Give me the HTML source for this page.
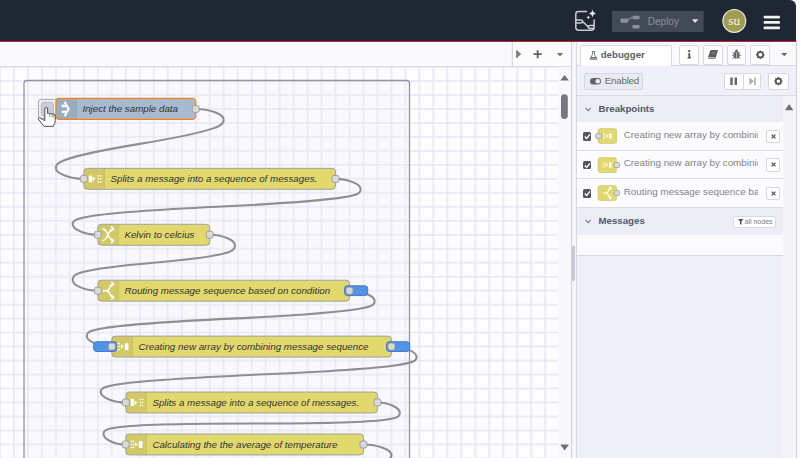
<!DOCTYPE html>
<html><head><meta charset="utf-8">
<style>
*{box-sizing:border-box}
html,body{margin:0;padding:0;width:800px;height:458px;overflow:hidden;background:#fafafc;font-family:"Liberation Sans",sans-serif}
.abs{position:absolute}
#hdr{left:0;top:0;width:796px;height:41px;background:#1f2734;border-top-right-radius:6px}
#tabbar{left:0;top:41.5px;width:572px;height:25.5px;background:#fafafc;border-bottom:1px solid #dcdce4}
#canvas{left:0;top:0;width:800px;height:458px}
.lbl{font-family:"Liberation Sans",sans-serif;font-style:italic;font-size:14px;fill:#333}
#sep{left:571px;top:41px;width:6px;height:417px;background:#f6f6fa;border-left:1px solid #cfcfd8;border-right:1px solid #d8d8e0}
#sidebar{left:577px;top:41px;width:219px;height:417px;background:#eff0f7;overflow:hidden}
#rightstrip{left:796px;top:40px;width:4px;height:418px;background:#fbfbfc;border-left:1px solid #cfcfd6}
.sb{position:absolute}
.tbtn{position:absolute;top:4.3px;height:20.2px;background:#fff;border:1px solid #d8d8e0;border-radius:2px}
.btn{position:absolute;background:#fff;border:1px solid #d8d8e0;border-radius:2px}
.hdrtxt{position:absolute;font-weight:bold;font-size:9.7px;color:#535a66}
.row{position:absolute;left:0;width:205.6px;background:#fcfcfe;border-bottom:1px solid #dcdce4}
.rowtxt{position:absolute;left:46.7px;font-size:9.85px;color:#828288;white-space:nowrap;width:134.5px;overflow:hidden}
.chk{position:absolute;left:5.8px;width:8.4px;height:8.6px;background:#55565c;border-radius:1.5px}
.xbtn{position:absolute;left:189.2px;width:13.8px;height:13.4px;background:#fff;border:1px solid #d6d6de;border-radius:2px}
</style></head>
<body>
<svg id="canvas" class="abs" width="800" height="458" viewBox="0 0 800 458">
  <defs>
    <pattern id="grid" x="0" y="67" width="13.98" height="13.98" patternUnits="userSpaceOnUse">
      <rect x="0" y="0" width="13.98" height="13.98" fill="#fdfdff"/>
      <rect x="-0.7" y="0" width="1.4" height="13.98" fill="#e4e4f3"/>
      <rect x="0" y="-0.7" width="13.98" height="1.4" fill="#e4e4f3"/>
      <rect x="13.28" y="0" width="1.4" height="13.98" fill="#e4e4f3"/>
      <rect x="0" y="13.28" width="13.98" height="1.4" fill="#e4e4f3"/>
    </pattern>
  </defs>
  <rect x="0" y="67" width="558" height="391" fill="url(#grid)"/>
  <rect x="558" y="67" width="13" height="391" fill="#f8f8fb"/>
  <rect x="24" y="80.5" width="385.5" height="420" rx="3" fill="#eeeef8" fill-opacity="0.35" stroke="#94949c" stroke-width="1.3"/>
<g transform="translate(0,67) scale(0.699)">
<path d="M 280 60 C 300 60 320 67.5 320 75 S 320 90 200 110 S 80 137.5 80 145 S 100 160 120 160" fill="none" stroke="#8f8f93" stroke-width="3"/>
<path d="M 480 160 C 498 160 516 167.5 516 175 S 516 190 310 200 S 104 217.5 104 225 S 122 240 140 240" fill="none" stroke="#8f8f93" stroke-width="3"/>
<path d="M 300 240 C 318 240 336 247.5 336 255 S 336 270 220 280 S 104 297.5 104 305 S 122 320 140 320" fill="none" stroke="#8f8f93" stroke-width="3"/>
<path d="M 500 320 C 518 320 536 327.5 536 335 S 536 350 330 360 S 124 377.5 124 385 S 142 400 160 400" fill="none" stroke="#8f8f93" stroke-width="3"/>
<path d="M 560 400 C 578 400 596 407.5 596 415 S 596 430 370 440 S 144 457.5 144 465 S 162 480 180 480" fill="none" stroke="#8f8f93" stroke-width="3"/>
<path d="M 540 480 C 556 480 572 487.5 572 495 S 572 510 360 510 S 148 517.5 148 525 S 164 540 180 540" fill="none" stroke="#8f8f93" stroke-width="3"/>
<path d="M 520 540 C 540 540 560 547.5 560 555 S 560 570 350 600 S 140 637.5 140 645 S 160 660 180 660" fill="none" stroke="#8f8f93" stroke-width="3"/>
<g transform="translate(55,46.3)"><rect x="0" y="0" width="32" height="27.5" rx="4" fill="#eeeef3" stroke="#a2a2aa" stroke-width="1.3"/><rect x="4.3" y="4.3" width="17" height="19.5" rx="3" fill="#c9cdd9" stroke="#a9adb8" stroke-width="1"/></g>
<rect x="80" y="45" width="200" height="30" rx="5" fill="#a6bbcf" stroke="#ff7f0e" stroke-width="1.8"/>
<path d="M81 46 h29 v28 h-29 z" fill="#000" fill-opacity="0.07"/>
<path d="M109.5 46 v28" stroke="#000" stroke-opacity="0.12" stroke-width="1.2" stroke-dasharray="1.5 1.5"/>
<g transform="translate(95,60) scale(1)"><path d="M-6.8 -4.2 H-0.4 M-6.8 4.2 H-0.4" stroke="#fff" stroke-width="3.3" fill="none"/><path d="M-2.6 -10.4 L3.2 0 L-2.6 10.4" stroke="#fff" stroke-width="2.8" fill="none" stroke-linejoin="miter"/></g>
<text x="118" y="64.9" class="lbl">Inject the sample data</text>
<rect x="275" y="55" width="10" height="10" rx="3" fill="#d9d9d9" stroke="#999" stroke-width="1.3"/>
<rect x="120" y="145" width="360" height="30" rx="5" fill="#e2d96e" stroke="#999" stroke-width="1.3"/>
<path d="M121 146 h29 v28 h-29 z" fill="#000" fill-opacity="0.07"/>
<path d="M149.5 146 v28" stroke="#000" stroke-opacity="0.12" stroke-width="1.2" stroke-dasharray="1.5 1.5"/>
<g transform="translate(135,160) scale(1)" fill="#fff"><rect x="-8" y="-4.9" width="4.9" height="9.8" rx="0.6"/><path d="M-2.4 -3.3 L1.6 0 L-2.4 3.3 z"/><rect x="4.7" y="-5.3" width="2" height="2"/><rect x="7.9" y="-5.3" width="2" height="2"/><rect x="4.7" y="-1" width="2" height="2"/><rect x="7.9" y="-1" width="2" height="2"/><rect x="4.7" y="3.3" width="2" height="2"/><rect x="7.9" y="3.3" width="2" height="2"/></g>
<text x="158" y="164.9" class="lbl">Splits a message into a sequence of messages.</text>
<rect x="115" y="155" width="10" height="10" rx="3" fill="#d9d9d9" stroke="#999" stroke-width="1.3"/>
<rect x="475" y="155" width="10" height="10" rx="3" fill="#d9d9d9" stroke="#999" stroke-width="1.3"/>
<rect x="140" y="225" width="160" height="30" rx="5" fill="#e2d96e" stroke="#999" stroke-width="1.3"/>
<path d="M141 226 h29 v28 h-29 z" fill="#000" fill-opacity="0.07"/>
<path d="M169.5 226 v28" stroke="#000" stroke-opacity="0.12" stroke-width="1.2" stroke-dasharray="1.5 1.5"/>
<g transform="translate(155,240) scale(1)" fill="none" stroke="#fff" stroke-width="2.1" stroke-linecap="round" stroke-linejoin="round"><path d="M-8 -8.5 C-1 -8.5 0 8.5 7 8.5 M-8 8.5 C-1 8.5 0 -8.5 7 -8.5"/><path d="M4.4 -11.4 L7.6 -8.5 L4.4 -5.6 M4.4 5.6 L7.6 8.5 L4.4 11.4"/></g>
<text x="178" y="244.9" class="lbl">Kelvin to celcius</text>
<rect x="135" y="235" width="10" height="10" rx="3" fill="#d9d9d9" stroke="#999" stroke-width="1.3"/>
<rect x="295" y="235" width="10" height="10" rx="3" fill="#d9d9d9" stroke="#999" stroke-width="1.3"/>
<rect x="140" y="305" width="360" height="30" rx="5" fill="#e2d96e" stroke="#999" stroke-width="1.3"/>
<path d="M141 306 h29 v28 h-29 z" fill="#000" fill-opacity="0.07"/>
<path d="M169.5 306 v28" stroke="#000" stroke-opacity="0.12" stroke-width="1.2" stroke-dasharray="1.5 1.5"/>
<g transform="translate(155,320) scale(1)" fill="none" stroke="#fff" stroke-width="2.1" stroke-linecap="round" stroke-linejoin="round"><path d="M-7.5 0 H-2.5 C0.5 0 1 -1.5 2 -4.5 C3 -8 4 -9.5 7.5 -9.5 M-2.5 0 C0.5 0 1 1.5 2 4.5 C3 8 4 9.5 7.5 9.5"/><path d="M4.8 -12.3 L7.8 -9.5 L4.8 -6.7 M4.8 6.7 L7.8 9.5 L4.8 12.3"/></g>
<text x="178" y="324.9" class="lbl">Routing message sequence based on condition</text>
<rect x="493" y="313" width="33" height="14" rx="4" fill="#5193e6" stroke="#3b74c4" stroke-width="1.3"/>
<rect x="135" y="315" width="10" height="10" rx="3" fill="#d9d9d9" stroke="#999" stroke-width="1.3"/>
<rect x="495" y="315" width="10" height="10" rx="3" fill="#d9d9d9" stroke="#999" stroke-width="1.3"/>
<rect x="160" y="385" width="400" height="30" rx="5" fill="#e2d96e" stroke="#999" stroke-width="1.3"/>
<path d="M161 386 h29 v28 h-29 z" fill="#000" fill-opacity="0.07"/>
<path d="M189.5 386 v28" stroke="#000" stroke-opacity="0.12" stroke-width="1.2" stroke-dasharray="1.5 1.5"/>
<g transform="translate(175,400) scale(1)" fill="#fff"><rect x="-8.3" y="-5.3" width="2" height="2"/><rect x="-5.3" y="-5.3" width="2" height="2"/><rect x="-8.3" y="-1" width="2" height="2"/><rect x="-5.3" y="-1" width="2" height="2"/><rect x="-8.3" y="3.3" width="2" height="2"/><rect x="-5.3" y="3.3" width="2" height="2"/><path d="M-2 -3.3 L2 0 L-2 3.3 z"/><rect x="3.6" y="-4.9" width="5.2" height="9.8" rx="0.6"/></g>
<text x="198" y="404.9" class="lbl">Creating new array by combining message sequence</text>
<rect x="134" y="393" width="33" height="14" rx="4" fill="#5193e6" stroke="#3b74c4" stroke-width="1.3"/>
<rect x="553" y="393" width="33" height="14" rx="4" fill="#5193e6" stroke="#3b74c4" stroke-width="1.3"/>
<rect x="155" y="395" width="10" height="10" rx="3" fill="#d9d9d9" stroke="#999" stroke-width="1.3"/>
<rect x="555" y="395" width="10" height="10" rx="3" fill="#d9d9d9" stroke="#999" stroke-width="1.3"/>
<rect x="180" y="465" width="360" height="30" rx="5" fill="#e2d96e" stroke="#999" stroke-width="1.3"/>
<path d="M181 466 h29 v28 h-29 z" fill="#000" fill-opacity="0.07"/>
<path d="M209.5 466 v28" stroke="#000" stroke-opacity="0.12" stroke-width="1.2" stroke-dasharray="1.5 1.5"/>
<g transform="translate(195,480) scale(1)" fill="#fff"><rect x="-8" y="-4.9" width="4.9" height="9.8" rx="0.6"/><path d="M-2.4 -3.3 L1.6 0 L-2.4 3.3 z"/><rect x="4.7" y="-5.3" width="2" height="2"/><rect x="7.9" y="-5.3" width="2" height="2"/><rect x="4.7" y="-1" width="2" height="2"/><rect x="7.9" y="-1" width="2" height="2"/><rect x="4.7" y="3.3" width="2" height="2"/><rect x="7.9" y="3.3" width="2" height="2"/></g>
<text x="218" y="484.9" class="lbl">Splits a message into a sequence of messages.</text>
<rect x="175" y="475" width="10" height="10" rx="3" fill="#d9d9d9" stroke="#999" stroke-width="1.3"/>
<rect x="535" y="475" width="10" height="10" rx="3" fill="#d9d9d9" stroke="#999" stroke-width="1.3"/>
<rect x="180" y="525" width="340" height="30" rx="5" fill="#e2d96e" stroke="#999" stroke-width="1.3"/>
<path d="M181 526 h29 v28 h-29 z" fill="#000" fill-opacity="0.07"/>
<path d="M209.5 526 v28" stroke="#000" stroke-opacity="0.12" stroke-width="1.2" stroke-dasharray="1.5 1.5"/>
<g transform="translate(195,540) scale(1)" fill="#fff"><rect x="-8.3" y="-5.3" width="2" height="2"/><rect x="-5.3" y="-5.3" width="2" height="2"/><rect x="-8.3" y="-1" width="2" height="2"/><rect x="-5.3" y="-1" width="2" height="2"/><rect x="-8.3" y="3.3" width="2" height="2"/><rect x="-5.3" y="3.3" width="2" height="2"/><path d="M-2 -3.3 L2 0 L-2 3.3 z"/><rect x="3.6" y="-4.9" width="5.2" height="9.8" rx="0.6"/></g>
<text x="218" y="544.9" class="lbl">Calculating the the average of temperature</text>
<rect x="175" y="535" width="10" height="10" rx="3" fill="#d9d9d9" stroke="#999" stroke-width="1.3"/>
<rect x="515" y="535" width="10" height="10" rx="3" fill="#d9d9d9" stroke="#999" stroke-width="1.3"/>
</g>
  <!-- hand cursor -->
  <path d="M44.8 109 Q44.8 107.5 46.2 107.5 Q47.6 107.5 47.6 109 V113.6 Q48.7 112.8 49.8 113.9 Q50.9 113.1 52 114.2 Q53.6 113.4 55.2 114.8 V120.8 Q55.2 123.5 53.2 126.4 H44.2 L38.4 119.2 Q37.8 117.6 39.6 117.6 L44.8 120.6 Z" fill="#fff" stroke="#3a3a40" stroke-width="0.9" stroke-linejoin="round"/>
  <path d="M49.8 114.2 V117.4 M52 114.4 V117.4 M53.7 114.8 V117.4" stroke="#555" stroke-width="0.6"/>
  <!-- scrollbar -->
  <path d="M560.3 80.5 L564.6 75 L569 80.5 Z" fill="#6f6f78"/>
  <rect x="561" y="94.3" width="6.8" height="24.7" rx="3.4" fill="#77777f"/>
  <path d="M560.3 444.5 L569 444.5 L564.6 450.5 Z" fill="#6f6f78"/>
</svg>
<div id="hdr" class="abs"></div>
<svg class="abs" style="left:0;top:0" width="800" height="41" viewBox="0 0 800 41">
  <!-- app icon -->
  <g fill="none" stroke="#c9ccd2" stroke-width="1.5" stroke-linecap="round" stroke-linejoin="round">
    <path d="M586.5 11.4 H578.5 Q575.8 11.4 575.8 14.1 V27.6 Q575.8 30.2 578.5 30.2 H591.4 Q594.1 30.2 594.1 27.6 V20"/>
    <path d="M576.2 19.9 H580.8 Q582.6 19.9 582.6 21.5 Q582.6 23.1 580.8 23.1 H576.2"/>
    <path d="M582.6 21.5 L588.3 26.9"/>
    <path d="M593.6 25.4 H590 Q588.3 25.4 588.3 26.9 Q588.3 28.4 590 28.4 H593.6"/>
  </g>
  <path d="M592.5 9.6 Q593.1 13 596.2 13.5 Q593.1 14 592.5 17.4 Q591.9 14 588.8 13.5 Q591.9 13 592.5 9.6 Z" fill="#e4e6ea"/>
  <path d="M588.3 15.6 Q588.6 17.1 590.1 17.4 Q588.6 17.7 588.3 19.2 Q588 17.7 586.5 17.4 Q588 17.1 588.3 15.6 Z" fill="#e4e6ea"/>
  <!-- deploy -->
  <rect x="612" y="11" width="91.6" height="21" fill="#434a57"/>
  <g fill="#8a8f99">
    <rect x="620.5" y="18.6" width="7.5" height="4.2" rx="0.8"/>
    <rect x="632.4" y="15.8" width="7.2" height="3.4" rx="0.8"/>
    <rect x="632.4" y="24.9" width="7.2" height="3.5" rx="0.8"/>
  </g>
  <path d="M627.5 20.5 L631.8 17.2" stroke="#8a8f99" stroke-width="1.3"/>
  <text x="647.8" y="24.6" font-family="Liberation Sans" font-size="10" fill="#8c919b">Deploy</text>
  <path d="M692 19.2 H698.3 L695.15 22.9 Z" fill="#e6e7ea"/>
  <!-- avatar -->
  <circle cx="734.3" cy="20.9" r="11.4" fill="#a09d52" stroke="#e8e8e0" stroke-width="1.2"/>
  <text x="734.2" y="24.8" text-anchor="middle" font-family="Liberation Serif" font-size="13.4" fill="#f3f3ea">su</text>
  <!-- hamburger -->
  <g fill="#f2f2f2">
    <rect x="763.6" y="15.7" width="16.4" height="2.7" rx="1"/>
    <rect x="763.6" y="21.1" width="16.4" height="2.7" rx="1"/>
    <rect x="763.6" y="26.5" width="16.4" height="2.7" rx="1"/>
  </g>
</svg>
<div id="tabbar" class="abs"></div>
<svg class="abs" style="left:500px;top:41px" width="72" height="26" viewBox="500 41 72 26">
  <rect x="512.3" y="41.5" width="59.7" height="24.5" fill="#fcfcfd"/>
  <path d="M512.3 41 V66" stroke="#cdcdd5" stroke-width="1"/>
  <path d="M571.5 41 V66" stroke="#dcdce4" stroke-width="1"/>
  <path d="M516.4 49.9 L521.3 54.1 L516.4 58.3 Z" fill="#7c7d88"/><path d="M516.9 50.2 V58" stroke="#777a55" stroke-width="1"/>
  <path d="M533.6 54.2 H541.7 M537.65 50.3 V58.2" stroke="#5f6068" stroke-width="1.8"/>
  <path d="M557 53 H563 L560 56.4 Z" fill="#707078"/>
</svg>
<div id="sep" class="abs"></div>
<div class="abs" style="left:572.2px;top:246px;width:3px;height:35px;background:#c8c8d2;border-radius:1px"></div>
<div id="sidebar" class="abs">
  <!-- tabs row -->
  <div class="sb" style="left:0;top:0;width:219px;height:25px;background:#fafafc;border-bottom:1px solid #d8d8e0"></div>
  <div class="sb" style="left:2.7px;top:4.2px;width:92.7px;height:21.5px;background:#fff;border:1px solid #d8d8e0;border-bottom:none;border-radius:2px 2px 0 0"></div>
  <svg class="sb" style="left:11.5px;top:9.6px" width="9" height="9" viewBox="0 0 9 9"><path d="M2.8 0.6 H6.2 M3.6 0.6 V3.4 L0.8 8.2 H8.2 L5.4 3.4 V0.6" fill="none" stroke="#7a7a80" stroke-width="1"/><path d="M2 6 H7 L7.9 7.8 H1.1 Z" fill="#7a7a80"/></svg>
  <div class="sb" style="left:23.7px;top:8.3px;font-size:9.7px;font-weight:bold;color:#5e5f66">debugger</div>
  <div class="tbtn" style="left:102.4px;width:19.4px"></div>
  <div class="tbtn" style="left:125.5px;width:20px"></div>
  <div class="tbtn" style="left:149.6px;width:19.8px"></div>
  <div class="tbtn" style="left:173.2px;width:20.1px"></div>
  <svg class="sb" style="left:0;top:0" width="219" height="25" viewBox="577 41 219 25">
    <circle cx="689.2" cy="51.2" r="1.15" fill="#555"/>
    <path d="M687.8 53.2 H690.2 V57.3 H690.9 V58.4 H687.6 V57.3 H688.4 V54.2 H687.8 Z" fill="#555"/>
    <path d="M708.3 56.6 L710.3 50.6 Q710.6 49.9 711.4 49.9 H718 L715.8 57.4 Q715.5 58.8 714.2 58.8 H709.4 Q708 58.8 708.3 57.4 Z" fill="#5a5b63"/>
    <path d="M709 57.6 H714.9" stroke="#d6d6da" stroke-width="0.9"/>
    <path d="M711.6 52.2 H716 M711.2 53.8 H715.4" stroke="#85868e" stroke-width="0.7"/>
    <ellipse cx="736.5" cy="55.2" rx="3" ry="3.6" fill="#666"/>
    <circle cx="736.5" cy="50.9" r="1.5" fill="#666"/>
    <path d="M732.4 52.2 L734 53.4 M740.6 52.2 L739 53.4 M732 55.4 H733.6 M741 55.4 H739.4 M732.4 58.6 L734 57.3 M740.6 58.6 L739 57.3" stroke="#666" stroke-width="0.9"/>
    <path d="M736.5 52.4 V58.6" stroke="#eee" stroke-width="0.6"/>
    <g transform="translate(760.3,54.7)">
      <circle r="2.7" fill="none" stroke="#555" stroke-width="1.7"/>
      <path d="M0 -4.3 V-2.6 M0 2.6 V4.3 M-4.3 0 H-2.6 M2.6 0 H4.3 M-3 -3 L-1.9 -1.9 M3 3 L1.9 1.9 M-3 3 L-1.9 1.9 M3 -3 L1.9 -1.9" stroke="#555" stroke-width="1.6"/>
    </g>
    <path d="M781.2 53.1 H787.4 L784.3 56.2 Z" fill="#666"/>
  </svg>
  <!-- toolbar -->
  <div class="sb" style="left:0;top:25px;width:219px;height:30px;background:#f0f1f8;border-bottom:1px solid #dcdce4"></div>
  <div class="btn" style="left:7.2px;top:31.8px;width:59.3px;height:17px;background:#e9eaf2;border-color:#d5d6e0"></div>
  <svg class="sb" style="left:13px;top:37.2px" width="11" height="6.5" viewBox="0 0 11 6.5"><rect x="0" y="0" width="11" height="6.5" rx="3.25" fill="#5d6570"/><circle cx="7.8" cy="3.25" r="2.3" fill="#f4f4f8"/></svg>
  <div class="sb" style="left:27.8px;top:33.6px;font-size:9.8px;letter-spacing:-0.25px;color:#6a6a72">Enabled</div>
  <div class="btn" style="left:147px;top:31.6px;width:19.5px;height:17.1px;border-radius:2px 0 0 2px"></div>
  <div class="btn" style="left:166.5px;top:31.6px;width:17.1px;height:17.1px;border-left:none;border-radius:0 2px 2px 0"></div>
  <div class="btn" style="left:191px;top:31.6px;width:20.7px;height:17.1px"></div>
  <svg class="sb" style="left:0;top:25px" width="219" height="30" viewBox="577 66 219 30">
    <rect x="730.3" y="77.5" width="2.4" height="7.5" fill="#666"/>
    <rect x="734.6" y="77.5" width="2.4" height="7.5" fill="#666"/>
    <path d="M749.3 77.5 L753.8 81.25 L749.3 85 Z" fill="#aaa"/>
    <rect x="754.2" y="77.5" width="1.5" height="7.5" fill="#aaa"/>
    <g transform="translate(778.4,81.2)">
      <circle r="2.6" fill="none" stroke="#555" stroke-width="1.6"/>
      <path d="M0 -4.1 V-2.5 M0 2.5 V4.1 M-4.1 0 H-2.5 M2.5 0 H4.1 M-2.9 -2.9 L-1.8 -1.8 M2.9 2.9 L1.8 1.8 M-2.9 2.9 L-1.8 1.8 M2.9 -2.9 L1.8 -1.8" stroke="#555" stroke-width="1.5"/>
    </g>
  </svg>
  <!-- content area -->
  <div class="sb" style="left:205.6px;top:55px;width:13.4px;height:362px;background:#f5f5f9"></div>
  <svg class="sb" style="left:208px;top:62.6px" width="9" height="7" viewBox="0 0 9 7"><path d="M0 6.3 L4.15 0 L8.3 6.3 Z" fill="#6f6f78"/></svg>
  <!-- breakpoints header -->
  <div class="sb" style="left:0;top:55px;width:205.6px;height:26px;background:#ededf5"></div>
  <svg class="sb" style="left:8px;top:66px" width="7" height="5" viewBox="0 0 7 5"><path d="M0.6 0.8 L3.2 3.6 L5.8 0.8" fill="none" stroke="#7a7a80" stroke-width="1.1"/></svg>
  <div class="hdrtxt" style="left:21.5px;top:62.2px">Breakpoints</div>
  <!-- rows -->
  <div class="row" style="top:81px;height:28.5px"></div>
  <div class="row" style="top:109.5px;height:28.5px"></div>
  <div class="row" style="top:138px;height:28.5px"></div>
  <div class="chk" style="top:91px"></div>
<svg class="sb" style="left:5.8px;top:91px" width="9" height="9" viewBox="0 0 9 9"><path d="M1.8 4.6 L3.6 6.4 L7 2.4" fill="none" stroke="#fff" stroke-width="1.4"/></svg>
<svg class="sb" style="left:16px;top:85.3px" width="30" height="20" viewBox="0 0 30 20"><rect x="5" y="2.6" width="18.6" height="14.9" rx="2.5" fill="#e2d96e" stroke="#c9c06a" stroke-width="0.6"/><g transform="translate(14.3,10) scale(0.5)"><g fill="#fff"><rect x="-8.3" y="-5.3" width="2" height="2"/><rect x="-5.3" y="-5.3" width="2" height="2"/><rect x="-8.3" y="-1" width="2" height="2"/><rect x="-5.3" y="-1" width="2" height="2"/><rect x="-8.3" y="3.3" width="2" height="2"/><rect x="-5.3" y="3.3" width="2" height="2"/><path d="M-2 -3.3 L2 0 L-2 3.3 z"/><rect x="3.6" y="-4.9" width="5.2" height="9.8" rx="0.6"/></g></g><rect x="2.6" y="7.5" width="6" height="5" rx="1.3" fill="#d9d9d9" stroke="#999" stroke-width="0.7"/></svg>
<div class="rowtxt" style="top:87.6px">Creating new array by combining message sequence</div>
<div class="xbtn" style="top:88.9px"></div>
<svg class="sb" style="left:192.5px;top:91.9px" width="7" height="7" viewBox="0 0 7 7"><path d="M1.6 1.6 L5.4 5.4 M5.4 1.6 L1.6 5.4" stroke="#555" stroke-width="1.3"/></svg>
<div class="chk" style="top:119.5px"></div>
<svg class="sb" style="left:5.8px;top:119.5px" width="9" height="9" viewBox="0 0 9 9"><path d="M1.8 4.6 L3.6 6.4 L7 2.4" fill="none" stroke="#fff" stroke-width="1.4"/></svg>
<svg class="sb" style="left:16px;top:113.8px" width="30" height="20" viewBox="0 0 30 20"><rect x="5" y="2.6" width="18.6" height="14.9" rx="2.5" fill="#e2d96e" stroke="#c9c06a" stroke-width="0.6"/><g transform="translate(14.3,10) scale(0.5)"><g fill="#fff"><rect x="-8.3" y="-5.3" width="2" height="2"/><rect x="-5.3" y="-5.3" width="2" height="2"/><rect x="-8.3" y="-1" width="2" height="2"/><rect x="-5.3" y="-1" width="2" height="2"/><rect x="-8.3" y="3.3" width="2" height="2"/><rect x="-5.3" y="3.3" width="2" height="2"/><path d="M-2 -3.3 L2 0 L-2 3.3 z"/><rect x="3.6" y="-4.9" width="5.2" height="9.8" rx="0.6"/></g></g><rect x="21.2" y="7.5" width="5.4" height="5" rx="1.3" fill="#d9d9d9" stroke="#999" stroke-width="0.7"/></svg>
<div class="rowtxt" style="top:116.1px">Creating new array by combining message sequence</div>
<div class="xbtn" style="top:117.4px"></div>
<svg class="sb" style="left:192.5px;top:120.4px" width="7" height="7" viewBox="0 0 7 7"><path d="M1.6 1.6 L5.4 5.4 M5.4 1.6 L1.6 5.4" stroke="#555" stroke-width="1.3"/></svg>
<div class="chk" style="top:148px"></div>
<svg class="sb" style="left:5.8px;top:148px" width="9" height="9" viewBox="0 0 9 9"><path d="M1.8 4.6 L3.6 6.4 L7 2.4" fill="none" stroke="#fff" stroke-width="1.4"/></svg>
<svg class="sb" style="left:16px;top:142.3px" width="30" height="20" viewBox="0 0 30 20"><rect x="5" y="2.6" width="18.6" height="14.9" rx="2.5" fill="#e2d96e" stroke="#c9c06a" stroke-width="0.6"/><g transform="translate(14.3,10) scale(0.5)"><g fill="none" stroke="#fff" stroke-width="2.1" stroke-linecap="round" stroke-linejoin="round"><path d="M-7.5 0 H-2.5 C0.5 0 1 -1.5 2 -4.5 C3 -8 4 -9.5 7.5 -9.5 M-2.5 0 C0.5 0 1 1.5 2 4.5 C3 8 4 9.5 7.5 9.5"/><path d="M4.8 -12.3 L7.8 -9.5 L4.8 -6.7 M4.8 6.7 L7.8 9.5 L4.8 12.3"/></g></g><rect x="21.2" y="7.5" width="5.4" height="5" rx="1.3" fill="#d9d9d9" stroke="#999" stroke-width="0.7"/></svg>
<div class="rowtxt" style="top:144.6px">Routing message sequence based on condition</div>
<div class="xbtn" style="top:145.9px"></div>
<svg class="sb" style="left:192.5px;top:148.9px" width="7" height="7" viewBox="0 0 7 7"><path d="M1.6 1.6 L5.4 5.4 M5.4 1.6 L1.6 5.4" stroke="#555" stroke-width="1.3"/></svg>
  <!-- messages header -->
  <div class="sb" style="left:0;top:166.5px;width:205.6px;height:27px;background:#ededf5"></div>
  <svg class="sb" style="left:8px;top:178px" width="7" height="5" viewBox="0 0 7 5"><path d="M0.6 0.8 L3.2 3.6 L5.8 0.8" fill="none" stroke="#7a7a80" stroke-width="1.1"/></svg>
  <div class="hdrtxt" style="left:21.5px;top:173.9px">Messages</div>
  <div class="btn" style="left:155.5px;top:174.7px;width:43.3px;height:12.4px"></div>
  <svg class="sb" style="left:160.5px;top:178.3px" width="6" height="6" viewBox="0 0 6 6"><path d="M0 0 H5.5 L3.5 2.5 V5.6 H2 V2.5 Z" fill="#555"/></svg>
  <div class="sb" style="left:167.5px;top:177.2px;font-size:7px;color:#7a7a84">all nodes</div>
  <div class="sb" style="left:0;top:193.5px;width:205.6px;height:21.5px;background:#fbfbfe;border-bottom:1px solid #d8d8e2"></div>
</div>
<div id="rightstrip" class="abs"></div>
<div class="abs" style="left:0;top:40.6px;width:796px;height:1.1px;background:#c41e2c"></div>
</body></html>
